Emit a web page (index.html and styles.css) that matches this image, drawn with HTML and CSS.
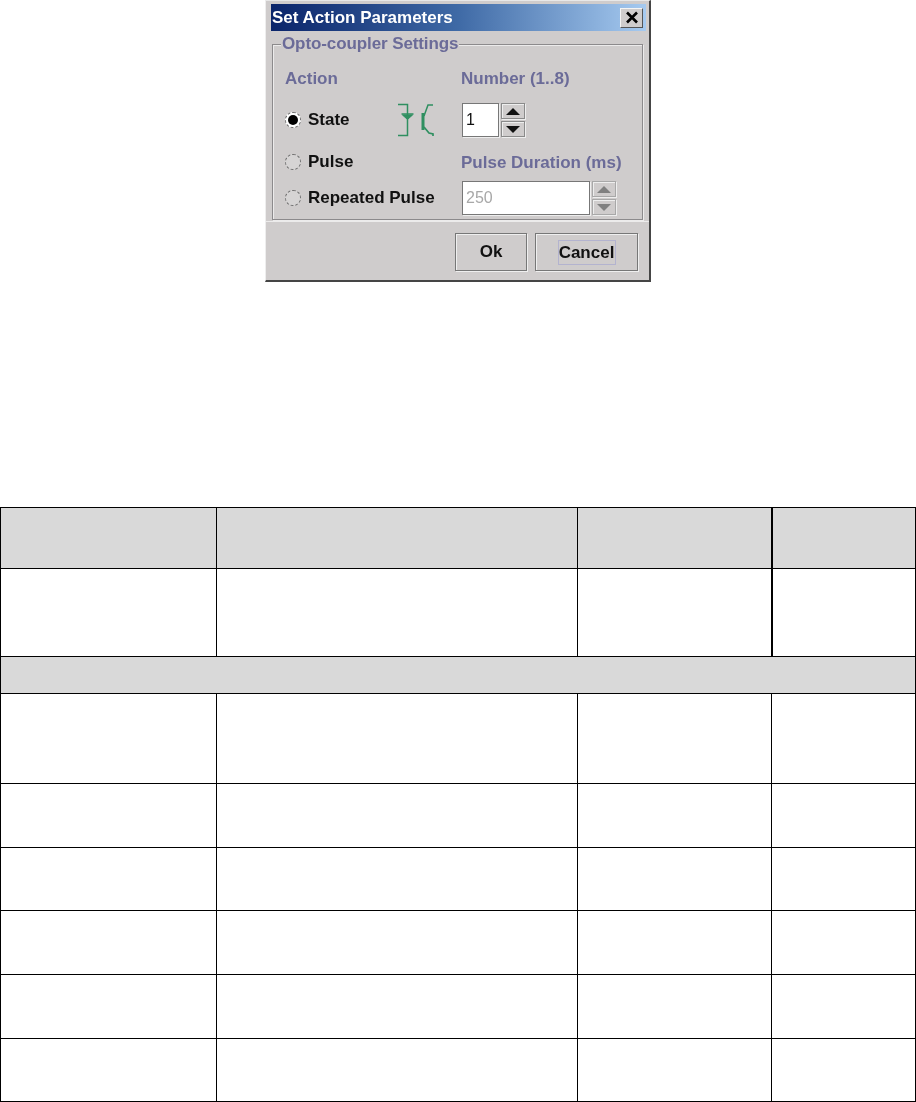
FILE: index.html
```html
<!DOCTYPE html>
<html lang="en">
<head>
<meta charset="utf-8">
<title>Set Action Parameters</title>
<link rel="stylesheet" href="styles.css">
</head>
<body>
<section class="dialog">
  <header class="titlebar">
    <span class="title">Set Action Parameters</span>
    <button class="close" type="button" aria-label="Close">
      <svg width="14" height="13" viewBox="0 0 14 13"><path d="M2 1.5L12 11.5M12 1.5L2 11.5" stroke="#000" stroke-width="2.6" fill="none"/></svg>
    </button>
  </header>
  <div class="group">
    <span class="legend">Opto-coupler Settings</span>
    <div class="grid">
      <div class="label">Action</div>
      <div class="label">Number (1..8)</div>

      <div class="option">
        <span class="radio selected"></span><span class="option-text">State</span>
        <svg class="opto" width="38" height="34" viewBox="0 0 38 34" fill="none" stroke="#2f8f60">
          <path d="M1 1.5H10.5V32.5H1" stroke-width="1.5"/>
          <path d="M4.5 11H16.5" stroke-width="1.5"/>
          <path d="M5.5 12L10.5 16.5L15.5 12Z" fill="#2f8f60" stroke-width="1"/>
          <path d="M26 10V27" stroke-width="3"/>
          <path d="M27 13L31 2H36" stroke-width="1.5"/>
          <path d="M27 24L32 30L36 31V33" stroke-width="1.7"/>
        </svg>
      </div>
      <div class="spinner">
        <div class="field narrow">1</div>
        <div class="arrows">
          <span class="arrow"><i class="up"></i></span>
          <span class="arrow"><i class="down"></i></span>
        </div>
      </div>

      <div class="option"><span class="radio"></span><span class="option-text">Pulse</span></div>
      <div class="label">Pulse Duration (ms)</div>

      <div class="option"><span class="radio"></span><span class="option-text">Repeated Pulse</span></div>
      <div class="spinner disabled">
        <div class="field wide">250</div>
        <div class="arrows">
          <span class="arrow"><i class="up"></i></span>
          <span class="arrow"><i class="down"></i></span>
        </div>
      </div>
    </div>
  </div>
  <footer class="actions">
    <button class="btn ok" type="button">Ok</button>
    <button class="btn cancel" type="button"><span class="focus">Cancel</span></button>
  </footer>
</section>

<table class="sheet">
  <colgroup><col class="c1"><col class="c2"><col class="c3"><col class="c4"></colgroup>
  <tr class="h61 shaded"><td></td><td></td><td class="thick"></td><td></td></tr>
  <tr class="h88"><td></td><td></td><td class="thick"></td><td></td></tr>
  <tr class="h37 shaded"><td colspan="4"></td></tr>
  <tr class="h90"><td></td><td></td><td></td><td></td></tr>
  <tr class="h64"><td></td><td></td><td></td><td></td></tr>
  <tr class="h63"><td></td><td></td><td></td><td></td></tr>
  <tr class="h64"><td></td><td></td><td></td><td></td></tr>
  <tr class="h64"><td></td><td></td><td></td><td></td></tr>
  <tr class="h63"><td></td><td></td><td></td><td></td></tr>
</table>
</body>
</html>
```

FILE: styles.css
```css
* { box-sizing: border-box; }
html, body { margin: 0; padding: 0; background: #fff; }
body { height: 1102px; overflow: hidden; font-family: "Liberation Sans", Arial, sans-serif; }

.dialog {
  width: 386px;
  height: 282px;
  margin-left: 265px;
  padding: 3px 3px 0 5px;
  background: #cfcccc;
  border-left: 1px solid #eeeeee;
  border-top: 1px solid #e8e8e8;
  border-right: 2px solid #454545;
  border-bottom: 2px solid #454545;
  display: flex;
  flex-direction: column;
  font-size: 17px;
  font-weight: 700;
  color: #111;
  filter: blur(0.35px);
}

.titlebar {
  height: 27px;
  flex: none;
  display: flex;
  align-items: center;
  justify-content: space-between;
  padding: 0 3px 0 1px;
  background: linear-gradient(90deg, #0a246a 0%, #3f6aa6 50%, #a6caf0 100%);
}
.title { color: #fff; line-height: 27px; }
.close {
  width: 23px;
  height: 20px;
  padding: 0;
  display: flex;
  align-items: center;
  justify-content: center;
  background: #cfcccc;
  border: 1px solid;
  border-color: #f4f4f4 #555 #555 #f4f4f4;
}

.group {
  position: relative;
  width: 371px;
  height: 176px;
  margin: 13px 0 0 1px;
  flex: none;
  border: 1px solid #8c8a8c;
  box-shadow: 1px 1px 0 #ecebeb, inset 1px 1px 0 #ecebeb;
}
.legend {
  position: absolute;
  left: 8px;
  top: -11px;
  line-height: 20px;
  padding: 0 1px;
  background: #cfcccc;
  color: #6b6b98;
  letter-spacing: -0.1px;
}
.grid {
  display: grid;
  grid-template-columns: 176px 1fr;
  grid-template-rows: 32px 42px 42px 36px;
  align-items: end;
  padding-top: 18px;
  padding-left: 12px;
}
.label { line-height: 32px; height: 32px; color: #6b6b98; }
.option { display: flex; align-items: center; height: 32px; margin-bottom: 1px; }
.radio {
  width: 16px;
  height: 16px;
  flex: none;
  border-radius: 50%;
  background: #d6d4d4;
  border: 1px dashed #6e6e6e;
  margin-right: 7px;
  display: flex;
  align-items: center;
  justify-content: center;
}
.radio.selected { background: #fff; }
.radio.selected::after {
  content: "";
  width: 10px;
  height: 10px;
  border-radius: 50%;
  background: #000;
}
.opto { margin-left: 47px; flex: none; }

.spinner { display: flex; height: 34px; align-items: stretch; margin-left: 1px; }
.field {
  background: #fff;
  border: 1px solid #777;
  box-shadow: 1px 1px 0 #eee;
  font-weight: 400;
  font-size: 16px;
  line-height: 32px;
  padding-left: 3px;
}
.narrow { width: 37px; color: #111; }
.wide { width: 128px; color: #a8a8a8; }
.arrows { display: flex; flex-direction: column; justify-content: space-between; margin-left: 2px; }
.arrow {
  width: 24px;
  height: 16px;
  display: flex;
  align-items: center;
  justify-content: center;
  background: #cfcccc;
  border: 1px solid #8a8a8a;
  box-shadow: 1px 1px 0 #eeeeee, inset 1px 1px 0 #eeeeee;
}
.arrow i { width: 0; height: 0; border-left: 7px solid transparent; border-right: 7px solid transparent; }
.arrow .up { border-bottom: 7px solid #111; }
.arrow .down { border-top: 7px solid #111; }
.disabled .arrow { border-color: #a8a8a8; }
.disabled .arrow .up { border-bottom-color: #808080; }
.disabled .arrow .down { border-top-color: #808080; }

.actions {
  flex: 1;
  display: flex;
  justify-content: flex-end;
  gap: 8px;
  padding: 11px 11px 0 0;
  margin: 1px -3px 0 -5px;
  border-top: 1px solid #ecebeb;
}
.btn {
  height: 38px;
  padding: 0;
  font: inherit;
  color: #111;
  background: #cfcccc;
  border: 1px solid #777;
  box-shadow: 1px 1px 0 #efefef, inset 1px 1px 0 #efefef;
  display: flex;
  align-items: center;
  justify-content: center;
}
.ok { width: 72px; }
.cancel { width: 103px; }
.focus { border: 1px solid #b3b3cf; padding: 2px 0; line-height: 19px; width: 58px; }

.sheet {
  margin-top: 225px;
  width: 916px;
  table-layout: fixed;
  border-collapse: collapse;
}
.c1 { width: 216px; }
.c2 { width: 361px; }
.c3 { width: 194px; }
.c4 { width: 144px; }
.sheet td { border: 1px solid #000; padding: 0; }
.shaded td { background: #d9d9d9; }
.sheet td.thick { border-right-width: 2px; }
.h61 { height: 61px; }
.h88 { height: 88px; }
.h37 { height: 37px; }
.h90 { height: 90px; }
.h64 { height: 64px; }
.h63 { height: 63px; }
```
